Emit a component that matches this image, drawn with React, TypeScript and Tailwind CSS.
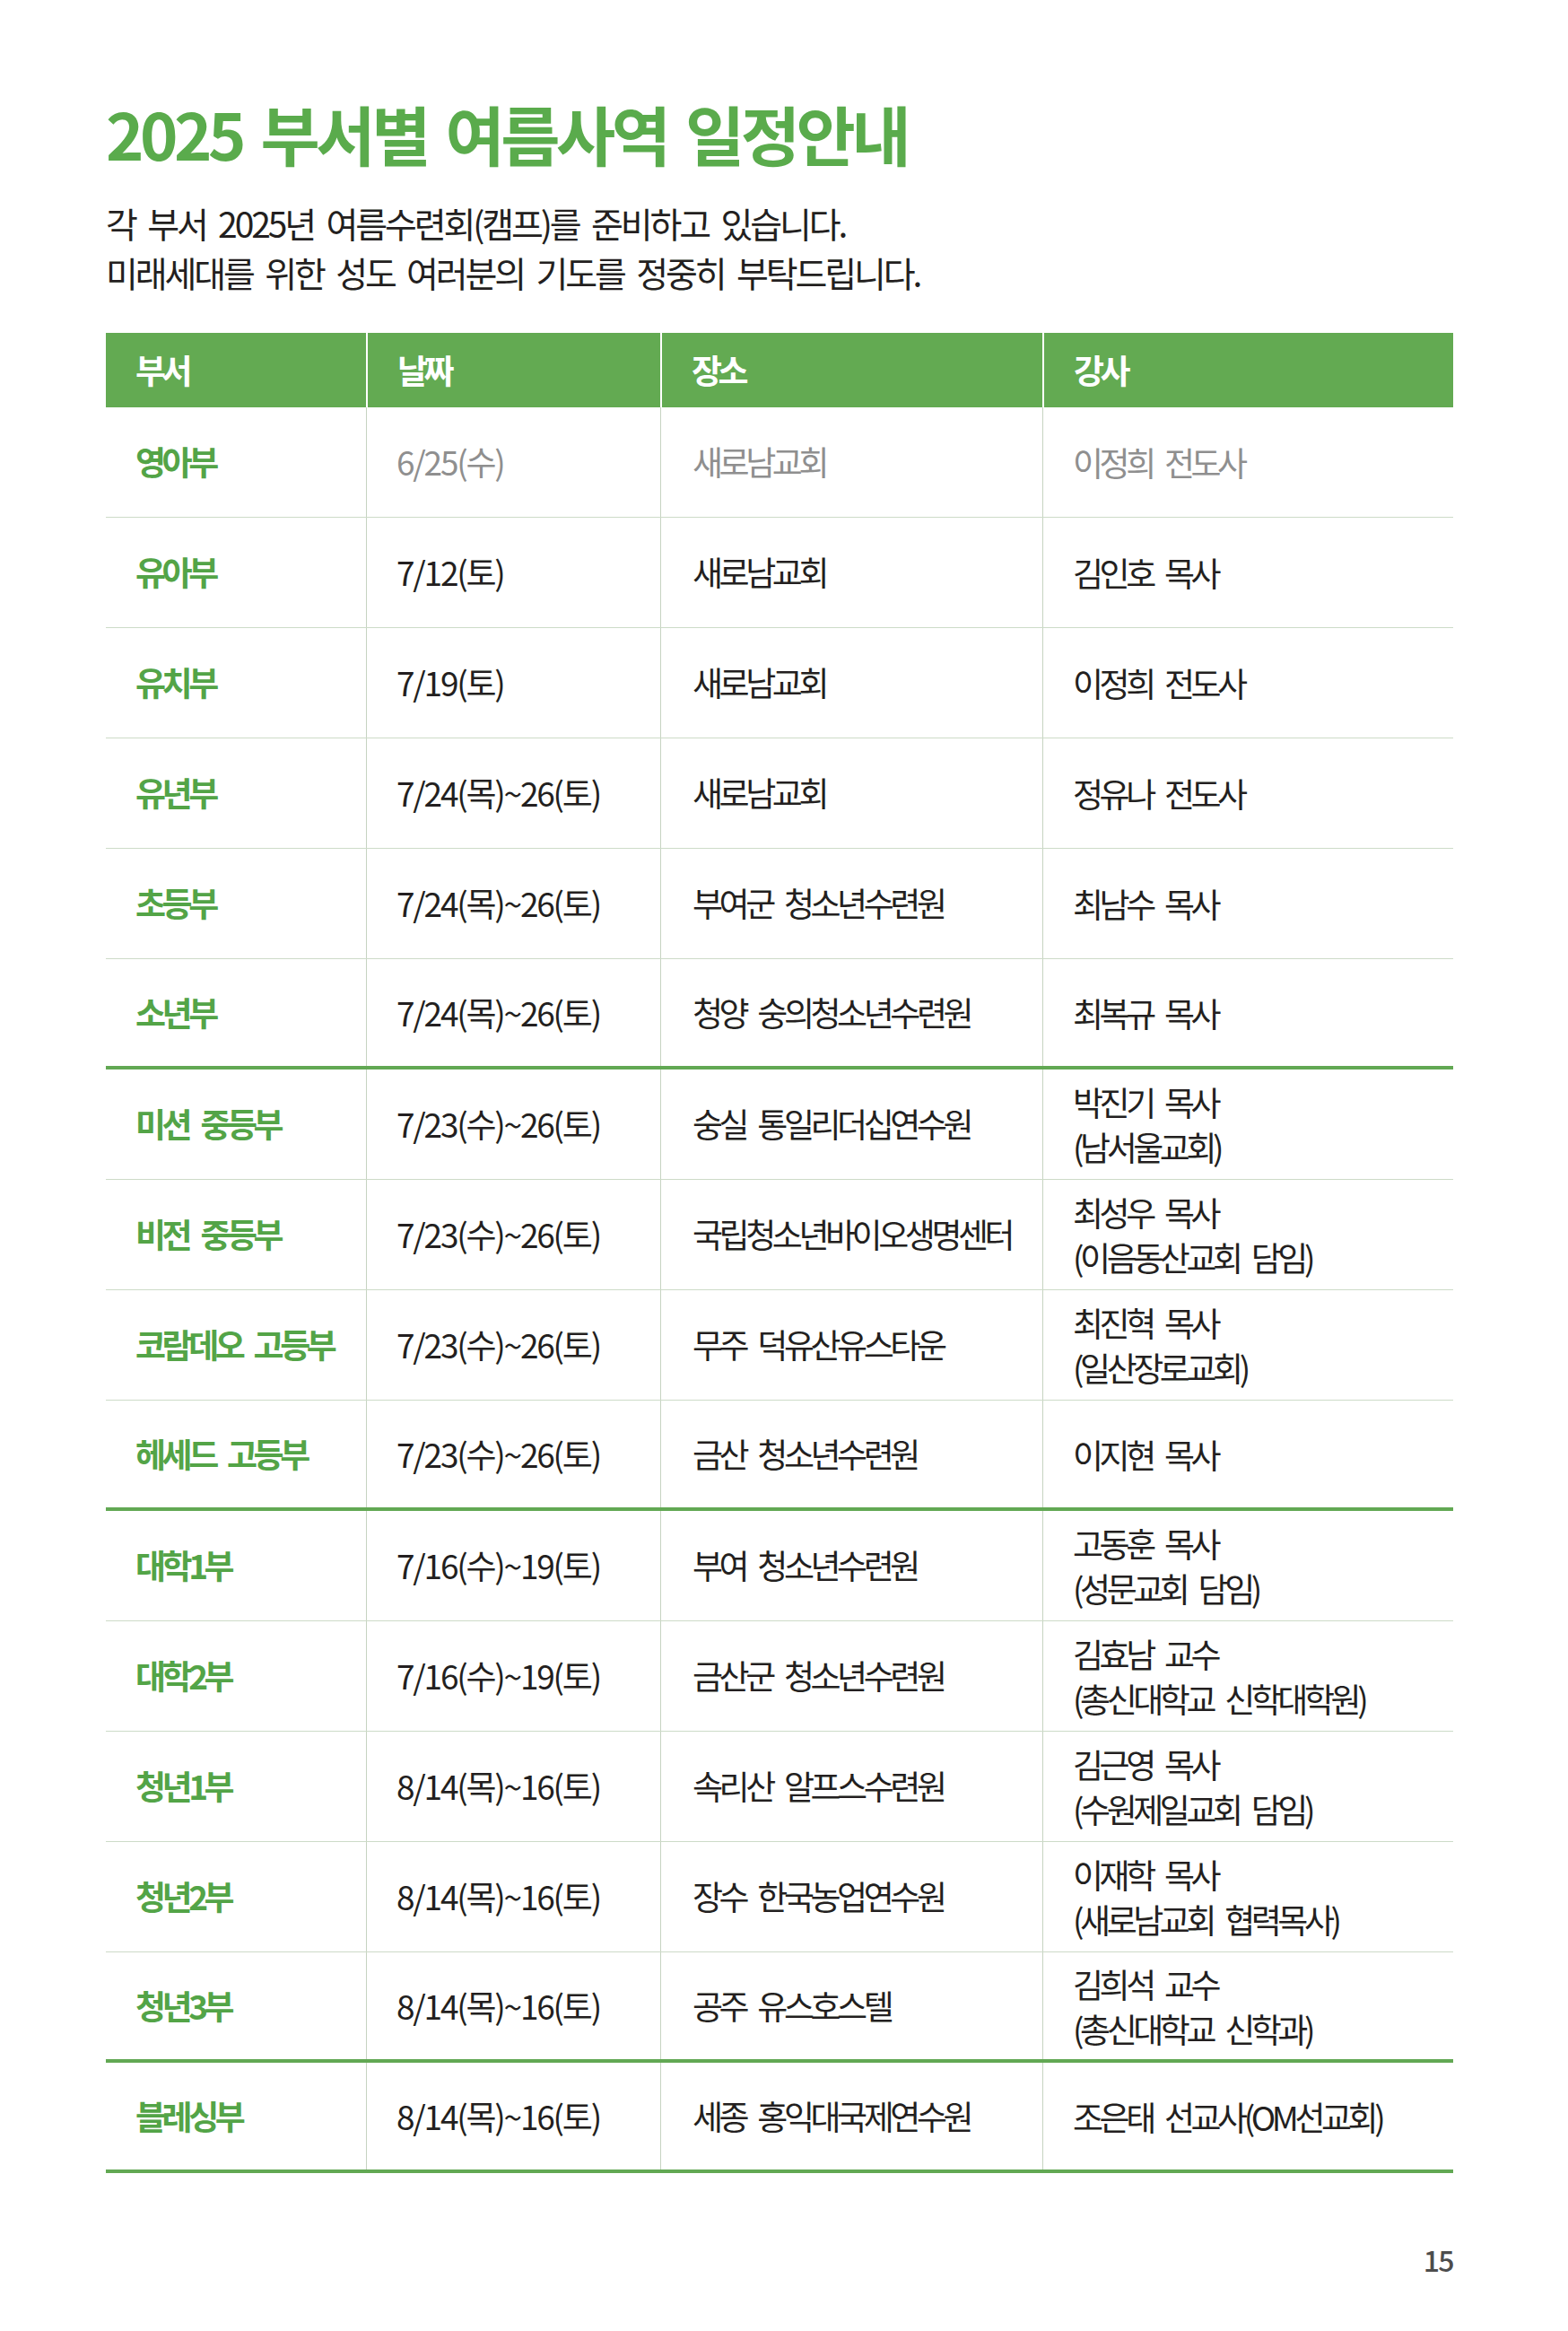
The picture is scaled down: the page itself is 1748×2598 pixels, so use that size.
type Row = {
  dept: string;
  date: string;
  place: string;
  speaker: string[];
  muted?: boolean;
  thick?: boolean;
};

const rows: Row[] = [
  { dept: '영아부', date: '6/25(수)', place: '새로남교회', speaker: ['이정희 전도사'], muted: true },
  { dept: '유아부', date: '7/12(토)', place: '새로남교회', speaker: ['김인호 목사'] },
  { dept: '유치부', date: '7/19(토)', place: '새로남교회', speaker: ['이정희 전도사'] },
  { dept: '유년부', date: '7/24(목)~26(토)', place: '새로남교회', speaker: ['정유나 전도사'] },
  { dept: '초등부', date: '7/24(목)~26(토)', place: '부여군 청소년수련원', speaker: ['최남수 목사'] },
  { dept: '소년부', date: '7/24(목)~26(토)', place: '청양 숭의청소년수련원', speaker: ['최복규 목사'], thick: true },
  { dept: '미션 중등부', date: '7/23(수)~26(토)', place: '숭실 통일리더십연수원', speaker: ['박진기 목사', '(남서울교회)'] },
  { dept: '비전 중등부', date: '7/23(수)~26(토)', place: '국립청소년바이오생명센터', speaker: ['최성우 목사', '(이음동산교회 담임)'] },
  { dept: '코람데오 고등부', date: '7/23(수)~26(토)', place: '무주 덕유산유스타운', speaker: ['최진혁 목사', '(일산장로교회)'] },
  { dept: '헤세드 고등부', date: '7/23(수)~26(토)', place: '금산 청소년수련원', speaker: ['이지현 목사'], thick: true },
  { dept: '대학1부', date: '7/16(수)~19(토)', place: '부여 청소년수련원', speaker: ['고동훈 목사', '(성문교회 담임)'] },
  { dept: '대학2부', date: '7/16(수)~19(토)', place: '금산군 청소년수련원', speaker: ['김효남 교수', '(총신대학교 신학대학원)'] },
  { dept: '청년1부', date: '8/14(목)~16(토)', place: '속리산 알프스수련원', speaker: ['김근영 목사', '(수원제일교회 담임)'] },
  { dept: '청년2부', date: '8/14(목)~16(토)', place: '장수 한국농업연수원', speaker: ['이재학 목사', '(새로남교회 협력목사)'] },
  { dept: '청년3부', date: '8/14(목)~16(토)', place: '공주 유스호스텔', speaker: ['김희석 교수', '(총신대학교 신학과)'], thick: true },
  { dept: '블레싱부', date: '8/14(목)~16(토)', place: '세종 홍익대국제연수원', speaker: ['조은태 선교사(OM선교회)'], thick: true },
];

const headers = ['부서', '날짜', '장소', '강사'];

export default function App() {
  return (
    <div className="w-[1748px] h-[2598px] bg-white pt-[112px] pl-[118px] pr-[128px] font-['Noto_Sans_CJK_KR',sans-serif]">
      {/* Title */}
      <h1 className="text-[72px] leading-[72px] font-semibold tracking-[-0.062em] [word-spacing:0.12em] text-[#5aab4c] whitespace-nowrap">
        2025 부서별 여름사역 일정안내
      </h1>
      <p className="mt-[37px] text-[39px] leading-[55px] tracking-[-0.08em] [word-spacing:0.2em] text-[#231f20] whitespace-nowrap">
        각 부서 2025년 여름수련회(캠프)를 준비하고 있습니다.
        <br />
        미래세대를 위한 성도 여러분의 기도를 정중히 부탁드립니다.
      </p>

      {/* Table */}
      <div className="mt-[40px] text-[37px] tracking-[-0.12em] [word-spacing:0.25em] whitespace-nowrap">
        <div className="grid grid-cols-[290px_328px_426px_1fr] h-[83px] bg-[#63aa52] text-white font-bold">
          {headers.map((h, i) => (
            <div
              key={h}
              className={`flex items-center pl-[33px] ${i > 0 ? 'border-l-2 border-white' : ''}`}
            >
              {h}
            </div>
          ))}
        </div>

        {rows.map((r) => (
          <div
            key={r.dept}
            className={`grid grid-cols-[290px_328px_426px_1fr] h-[123px] ${
              r.thick ? 'border-b-4 border-[#62a853]' : 'border-b border-[#cddbc8]'
            }`}
          >
            <div className="flex items-center pl-[33px] font-semibold text-[#53a447]">{r.dept}</div>
            <div
              className={`flex items-center pl-[33px] tracking-[-0.06em] border-l border-[#c6d3c1] ${
                r.muted ? 'text-[#8f8f8f]' : 'text-[#231f20]'
              }`}
            >
              {r.date}
            </div>
            <div
              className={`flex items-center pl-[35px] border-l border-[#c6d3c1] ${
                r.muted ? 'text-[#8f8f8f]' : 'text-[#231f20]'
              }`}
            >
              {r.place}
            </div>
            <div
              className={`flex flex-col justify-center pl-[33px] leading-[50px] border-l border-[#c6d3c1] ${
                r.muted ? 'text-[#8f8f8f]' : 'text-[#231f20]'
              }`}
            >
              {r.speaker.map((s) => (
                <span key={s}>{s}</span>
              ))}
            </div>
          </div>
        ))}
      </div>

      {/* Page number */}
      <div className="mt-[76px] text-right text-[32px] leading-[40px] font-medium tracking-[-0.05em] text-[#4d4d4d]">
        15
      </div>
    </div>
  );
}
